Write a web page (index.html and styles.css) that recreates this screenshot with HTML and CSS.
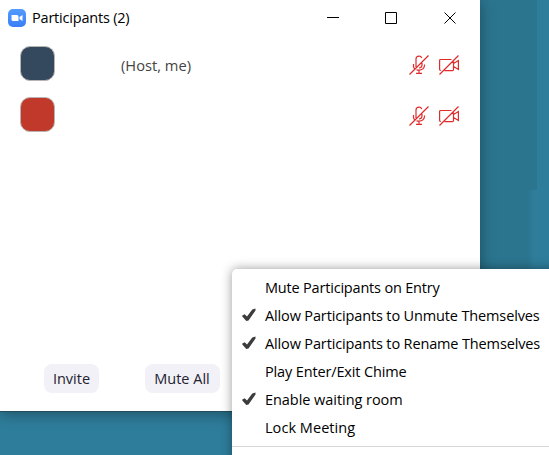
FILE: index.html
```html
<!DOCTYPE html>
<html lang="en">
<head>
<meta charset="utf-8">
<title>Participants</title>
<link rel="stylesheet" href="styles.css">
</head>
<body>
<svg class="defs" aria-hidden="true">
  <symbol id="mic" viewBox="0 0 20 20">
    <path d="M7 12V4Q7 1.2 10 1.2Q12 1.2 12.8 3M13 8v2Q12.8 13 10 13M4.5 9v2Q4.5 12.5 5.5 13.7M15.5 9.500v1Q15 15 10 15.200Q8.500 15.200 7.500 14.700M10 15.200v3M7 18.400h6M.5 19.500L19.500.5"/>
  </symbol>
  <symbol id="camera" viewBox="0 0 20 20">
    <path d="M1.800 15.500Q.6 15.500 .6 14V5.600Q.6 4.500 1.800 4.500H12.500M14.500 6.500V14.500Q14.500 15.600 13.400 15.600H5.500M14.500 8.500L19.400 5.500V14.500L14.500 11.500M.5 19.500L19.500.5"/>
  </symbol>
  <symbol id="check" viewBox="0 0 14 14">
    <path d="M.3 7.500L2.700 6.300L5 8.500L10.300 1.500L13.500.5V2.500L6.500 12.500L4.300 13L.3 8.500Z"/>
  </symbol>
</svg>
<div class="desktop">
  <main class="window">
    <header class="titlebar">
      <svg class="logo" viewBox="0 0 18 18"><defs><linearGradient id="blue" x2="0" y2="1"><stop stop-color="#519cff"/><stop offset="1" stop-color="#3b7df8"/></linearGradient></defs><rect width="18" height="18" rx="5" fill="url(#blue)"/><path fill="#fff" d="M3.500 6h5.500q1.500 0 1.500 1.500V12H5q-1.500 0-1.500-1.500zM11.500 8l3-2v6l-3-2z"/></svg>
      <h1 class="title">Participants (2)</h1>
      <svg class="controls" viewBox="0 0 130 12"><path d="M0 5.500h12M58.500.5h11v11h-11zM117.500.5l11 11M128.500.5l-11 11"/></svg>
    </header>
    <ul class="people">
      <li class="person"><span class="avatar navy"></span><span class="role">(Host, me)</span><svg class="status"><use href="#mic"/></svg><svg class="status"><use href="#camera"/></svg></li>
      <li class="person"><span class="avatar red"></span><span class="role"></span><svg class="status"><use href="#mic"/></svg><svg class="status"><use href="#camera"/></svg></li>
    </ul>
    <footer class="actions"><button class="button invite">Invite</button><button class="button mute">Mute All</button></footer>
  </main>
  <div class="menu">
    <div class="item"><span class="mark"></span><span class="entry">Mute Participants on Entry</span></div>
    <div class="item"><svg class="mark"><use href="#check"/></svg><span class="unmute">Allow Participants to Unmute Themselves</span></div>
    <div class="item"><svg class="mark"><use href="#check"/></svg><span class="rename">Allow Participants to Rename Themselves</span></div>
    <div class="item"><span class="mark"></span><span class="chime">Play Enter/Exit Chime</span></div>
    <div class="item"><svg class="mark"><use href="#check"/></svg><span class="waiting">Enable waiting room</span></div>
    <div class="item"><span class="mark"></span><span class="lock">Lock Meeting</span></div>
    <div class="divider"></div>
  </div>
</div>
</body>
</html>
```
FILE: styles.css
```css
* { box-sizing: border-box; }
body { margin: 0; font-family: "Open Sans", "Noto Sans", sans-serif; font-size: 14.5px; color: #111; }
.defs { position: absolute; width: 0; height: 0; }
.desktop { position: relative; width: 549px; height: 455px; overflow: hidden; background: linear-gradient(#2b758f, #2b758f) 480px 0 / 57px 190px no-repeat, linear-gradient(90deg, #2b758f 0 528px, #2e7d9b 534px) 0 190px / 549px 221px no-repeat, #2e7d9b; }
.window { display: flex; flex-direction: column; width: 480px; height: 412px; background: #fff; border-bottom: 1px solid #244d5c; box-shadow: 0 2px 14px rgba(0, 0, 0, .35); }
.titlebar { display: flex; align-items: center; height: 36px; padding: 0 23px 0 8px; }
.logo { width: 18px; height: 18px; margin-right: 6px; }
.title { flex: 1; margin: 0; font-size: 14.5px; font-weight: 400; line-height: 20px; letter-spacing: -.2px; color: #000; }
.controls { width: 130px; height: 12px; fill: none; stroke: #000; }
.people { flex: 1; margin: 0; padding: 3px 0 0; list-style: none; }
.person { display: flex; align-items: center; height: 51px; padding: 0 21px 0 20px; }
.avatar { width: 35px; height: 35px; margin: -2px 66px 0 0; border: 1px solid #b9b4b2; border-radius: 10px; }
.navy { background: #34495e; }
.red { background: #c0392b; }
.role { flex: 1; color: #444; font-size: 14.7px; }
.status { width: 20px; height: 20px; margin-left: 10px; fill: none; stroke: #e02b2b; stroke-width: 1.2; }
.actions { display: flex; gap: 46px; height: 47px; padding-left: 44px; }
.button { height: 29px; padding: 0; border: 0; border-radius: 8px; background: #f2f1f7; color: #222230; font: inherit; }
.invite { width: 55px; }
.mute { width: 75px; padding-right: 1px; }
.menu { position: absolute; left: 232px; top: 269px; width: 325px; height: 194px; padding-top: 4px; background: #fff; border-radius: 5px 0 0; box-shadow: 0 0 11px rgba(0, 0, 0, .4); color: #000; letter-spacing: -.14px; }
.item { display: flex; align-items: center; height: 28px; padding-left: 10px; white-space: nowrap; }
.mark { width: 14px; height: 14px; margin-right: 9px; fill: #3c3c3c; }
.entry { letter-spacing: -.19px; }
.waiting { letter-spacing: -.05px; }
.lock { letter-spacing: .05px; }
.divider { height: 1px; margin-top: 5px; background: #d8d8d8; }
```
